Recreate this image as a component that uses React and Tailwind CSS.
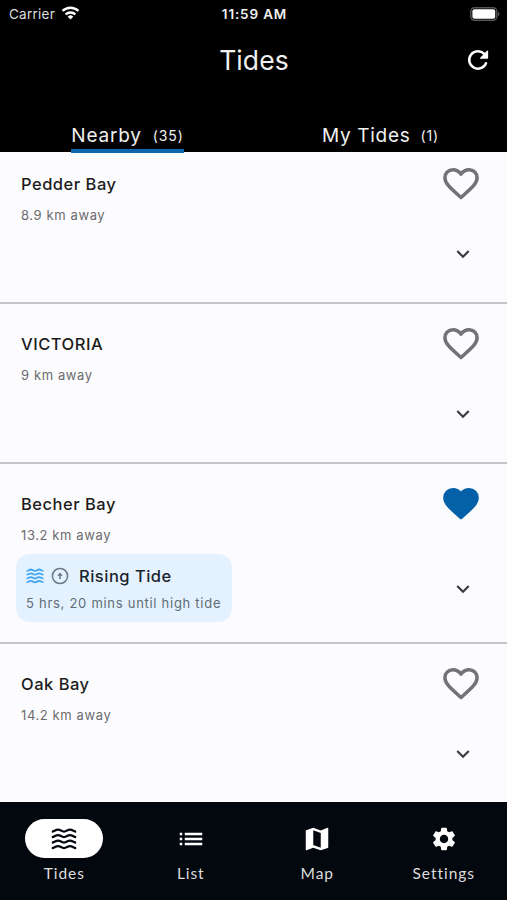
import { MdList, MdMap, MdSettings, MdKeyboardArrowDown } from "react-icons/md";

function Waves({ className, strokeWidth = 2.3 }) {
  return (
    <svg viewBox="0 0 26 22" className={className} fill="none" stroke="currentColor" strokeWidth={strokeWidth} strokeLinecap="butt" strokeLinejoin="round">
      {[3.6, 9.1, 14.6, 20.1].map((y) => (
        <path key={y} d={`M0.8 ${y} C3.5 ${y} 4.5 ${y - 2} 7 ${y - 2} S10.5 ${y} 13 ${y} S16.5 ${y - 2} 19 ${y - 2} S22.5 ${y} 25.2 ${y}`} />
      ))}
    </svg>
  );
}

function Heart({ filled, className }) {
  return (
    <svg viewBox="0 0 24 24" className={className} fill={filled ? "currentColor" : "none"} stroke="currentColor" strokeWidth="2" strokeLinejoin="round">
      <path d="M12 19.7C6.4 14.7 2.8 11.9 2.8 8.4 2.8 5.8 4.8 3.9 7.4 3.9c1.8 0 3.5 1 4.6 2.5 1.1-1.5 2.8-2.5 4.6-2.5 2.6 0 4.6 1.9 4.6 4.5 0 3.5-3.6 6.3-9.2 11.3z" />
    </svg>
  );
}

function Reload({ className }) {
  return (
    <svg viewBox="0 0 24 24" className={className}>
      <path d="M20 15.2A8.7 8.7 0 1 1 18 5.7" fill="none" stroke="currentColor" strokeWidth="2.5" strokeLinecap="round" />
      <path d="M21 2.8q1.1-.9 1.1.4v6.6q0 .9-.9.9h-6.5q-1.4 0-.5-1z" fill="currentColor" />
    </svg>
  );
}

function StatusBar() {
  return (
    <div className="grid h-[28px] grid-cols-3 items-center pl-[9px] pr-[7px] text-[13.5px]">
      <div className="flex items-center gap-[6px]">
        <span className="tracking-[0.25px] text-[#dddddd]">Carrier</span>
        <svg viewBox="0 0 20 15" className="-mt-[2px] h-[14px] w-[19px]" fill="none" stroke="white" strokeWidth="2.6">
          <path d="M1.5 5.3a12.2 12.2 0 0 1 17 0" />
          <path d="M4.8 9a7.5 7.5 0 0 1 10.4 0" />
          <path d="M10 14.5l-3-3.1a4.3 4.3 0 0 1 6 0z" fill="white" stroke="none" />
        </svg>
      </div>
      <div className="whitespace-nowrap text-center font-semibold tracking-[0.85px]">11:59 AM</div>
      <div className="flex justify-end">
        <svg viewBox="0 0 30 14" className="-mt-[1px] h-[14px] w-[30px]">
          <rect x="0.8" y="0.8" width="26" height="12.4" rx="3.6" fill="none" stroke="#555" strokeWidth="1.4" />
          <rect x="2.4" y="2.2" width="22.8" height="9.6" rx="2" fill="white" />
          <path d="M28 4.8q1.6 0.7 1.6 2.2t-1.6 2.2z" fill="#555" />
        </svg>
      </div>
    </div>
  );
}

function TideRow({ name, distance, favorite, children, className }) {
  return (
    <div className={`flex justify-between border-[#c4c4c6] pr-[25px] ${className}`}>
      <div>
        <div className="pl-[21px] text-[16.5px] font-medium leading-[24px] tracking-[0.5px] text-[#1d1d20]">{name}</div>
        <div className="mt-[10px] pl-[21px] text-[13px] leading-[18px] tracking-[0.6px] text-[#6b6b6e]">{distance}</div>
        {children}
      </div>
      <div className={`flex flex-col items-center justify-between ${favorite ? "pb-[40px]" : "pb-[35px]"}`}>
        <Heart filled={favorite} className={`-mt-[9px] size-[42px] ${favorite ? "text-[#0461a8]" : "text-[#737375]"}`} />
        <MdKeyboardArrowDown className="ml-[4px] size-[26px] text-[#3c3c3e]" />
      </div>
    </div>
  );
}

function NavItem({ label, active, children }) {
  return (
    <div className="flex flex-1 flex-col items-center pt-[17px]">
      <div className={`flex h-[39px] w-[78px] items-center justify-center rounded-full ${active ? "bg-white text-[#05080f]" : "text-white"}`}>
        {children}
      </div>
      <div className="mt-[5px] font-[Lato,sans-serif] text-[15.5px] leading-[20px] tracking-[0.95px] text-[#dedede]">{label}</div>
    </div>
  );
}

export default function App() {
  return (
    <div className="flex h-[900px] w-[507px] flex-col overflow-hidden bg-[#fcfcfe] font-[Inter,sans-serif]">
      <header className="flex h-[152px] shrink-0 flex-col bg-black text-[#f0f0f0]">
        <StatusBar />
        <div className="grid h-[64px] grid-cols-3 items-center pr-[17px]">
          <span />
          <h1 className="pl-[18px] pt-[1px] text-center text-[26.5px] tracking-[0.1px]">Tides</h1>
          <Reload className="size-[24px] justify-self-end text-white" />
        </div>
        <div className="mt-auto flex">
          <div className="flex flex-1 justify-center pl-[1px]">
            <div className="z-10 -mb-[1px] flex h-[29px] items-start gap-[11px] border-b-4 border-[#0f66ac]">
              <span className="text-[19px] leading-[24px] tracking-[0.8px]">Nearby</span>
              <span className="text-[14px] leading-[23px] tracking-[0.9px]">(35)</span>
            </div>
          </div>
          <div className="flex flex-1 justify-center">
            <div className="flex h-[28px] items-start gap-[10px]">
              <span className="text-[19px] leading-[24px] tracking-[0.7px]">My Tides</span>
              <span className="text-[14px] leading-[23px] tracking-[0.9px]">(1)</span>
            </div>
          </div>
        </div>
      </header>
      <main className="flex-1">
        <TideRow className="h-[152px] border-b-2 pt-[20px]" name="Pedder Bay" distance="8.9 km away" />
        <TideRow className="h-[160px] border-b-2 pt-[28px]" name="VICTORIA" distance="9 km away" />
        <TideRow className="h-[180px] border-b-2 pt-[28px]" name="Becher Bay" distance="13.2 km away" favorite>
          <div className="ml-[16px] mt-[10px] h-[68px] w-[216px] rounded-[14px] bg-[#e3f2fe] pl-[10px] pt-[10px]">
            <div className="flex items-center">
              <Waves strokeWidth={2.6} className="h-[16px] w-[18px] text-[#3fa4f4]" />
              <svg viewBox="0 0 18 18" className="ml-[7px] size-[18px] text-[#6c7983]" fill="none" stroke="currentColor" strokeWidth="1.5">
                <circle cx="9" cy="9" r="7.6" />
                <path d="M9 12V6.8M7 8.7L9 6.6l2 2.1" />
              </svg>
              <span className="ml-[10px] text-[16.5px] font-medium leading-[24px] tracking-[0.5px] text-[#1b242c]">Rising Tide</span>
            </div>
            <div className="mt-[6px] whitespace-nowrap text-[13px] leading-[18px] tracking-[0.72px] text-[#626d76]">5 hrs, 20 mins until high tide</div>
          </div>
        </TideRow>
        <TideRow className="h-[158px] pt-[28px]" name="Oak Bay" distance="14.2 km away" />
      </main>
      <nav className="flex h-[98px] shrink-0 bg-[#03070e] pl-[1px]">
        <NavItem label="Tides" active><Waves className="h-[22px] w-[26px]" /></NavItem>
        <NavItem label="List"><MdList className="size-[30px]" /></NavItem>
        <NavItem label="Map"><MdMap className="size-[30px]" /></NavItem>
        <NavItem label="Settings"><MdSettings className="size-[28px]" /></NavItem>
      </nav>
    </div>
  );
}
